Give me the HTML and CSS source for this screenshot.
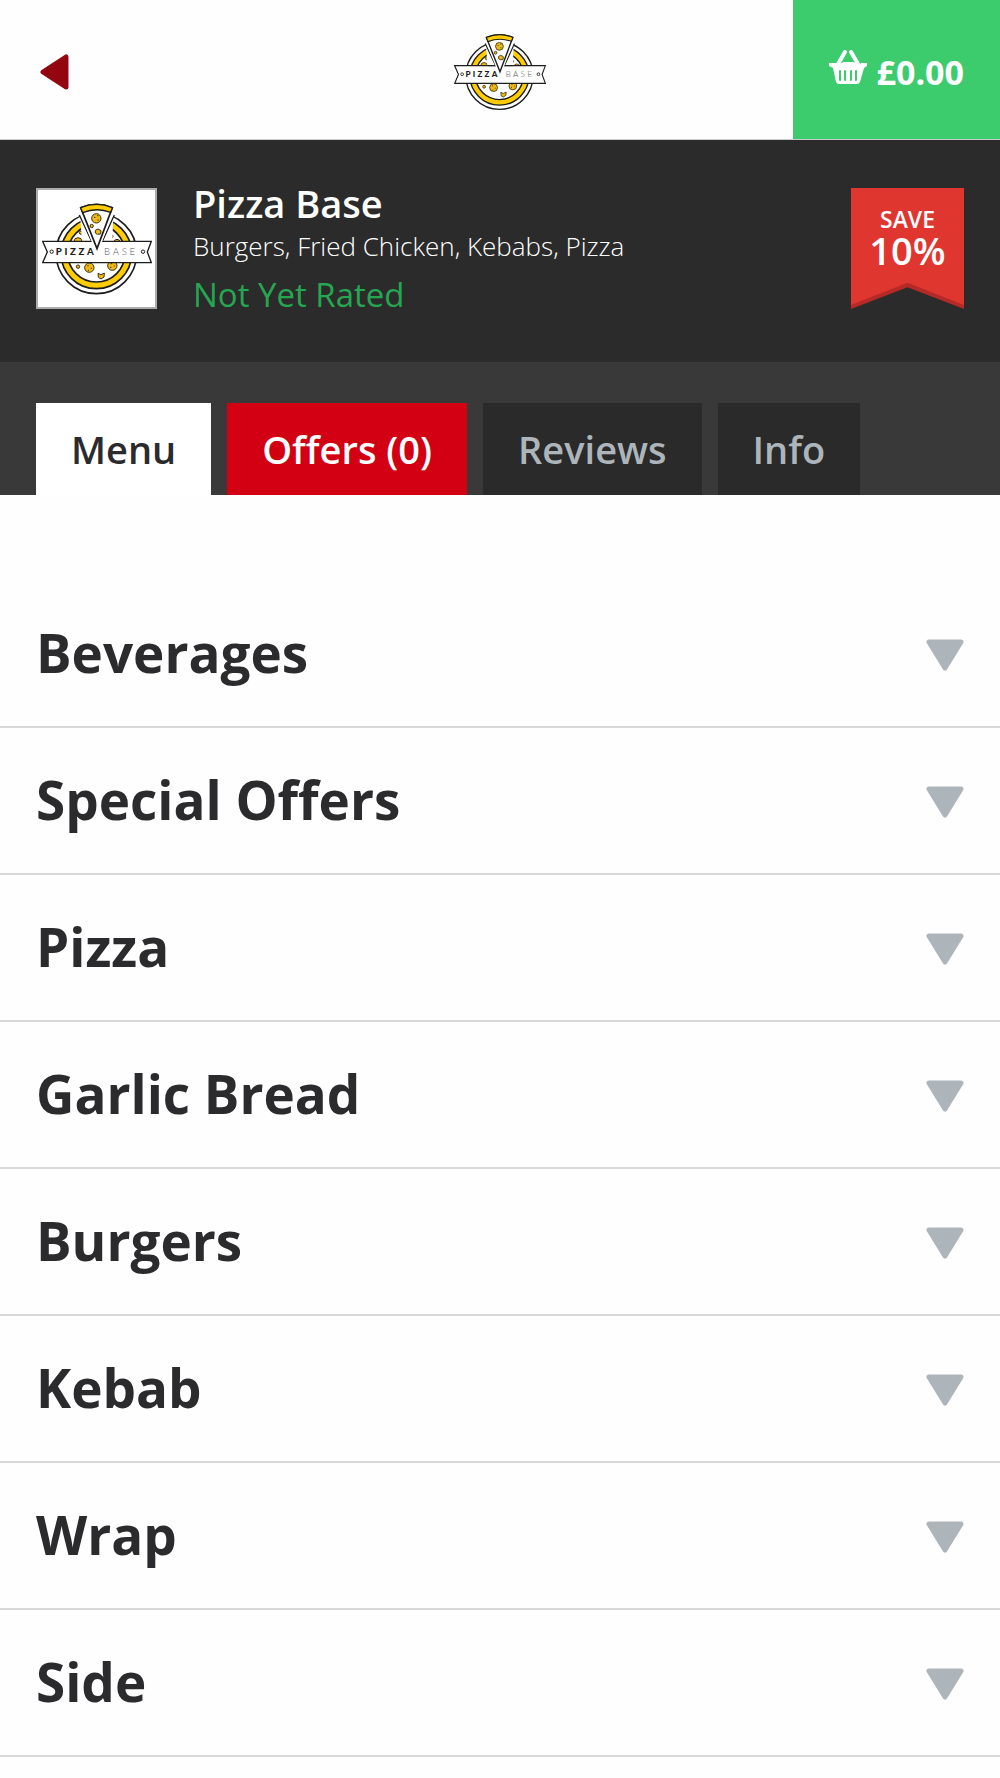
FILE: index.html
```html
<!DOCTYPE html>
<html lang="en">
<head>
    <meta charset="UTF-8">
    <meta name="viewport" content="width=device-width, initial-scale=1.0">
    <title>Pizza Base</title>
    <link rel="stylesheet" href="styles.css">
</head>
<body>
    <!-- shared drawings -->
    <svg class="sprite" aria-hidden="true">
        <symbol id="logo" viewBox="66 96 330 280">
            <circle cx="229" cy="249" r="121" fill="#fff" stroke="#1d1d1d" stroke-width="5"/>
            <circle cx="229" cy="249" r="96" fill="none" stroke="#1d1d1d" stroke-width="25"/>
            <circle cx="229" cy="249" r="96" fill="none" stroke="#fc0" stroke-width="15"/>
            <g fill="#f0b90f" stroke="#3b3214" stroke-width="3">
                <circle cx="174" cy="214" r="12"/>
                <circle cx="183" cy="187" r="5"/>
                <circle cx="274" cy="198" r="5"/>
                <circle cx="291" cy="216" r="9"/>
                <circle cx="174" cy="289" r="5"/>
                <circle cx="208" cy="292" r="14"/>
                <circle cx="277" cy="286" r="14"/>
                <path d="M234 309l9 4 10-5-1 12-9 6-8-5z"/>
                <path d="M202 286h4m6 8h4m-12 6h3m65-20h4m5 7h3m-14 4h4" fill="none"/>
            </g>
            <path d="M68 213H394L382 245 394 277H68L82 245Z" fill="#fff" stroke="#1d1d1d" stroke-width="4"/>
            <path d="M179 114Q229 90 281 114L277 212H186Z" fill="#fff"/>
            <path d="M178 134L214 211M283 134L248 211" fill="none" stroke="#1d1d1d" stroke-width="4"/>
            <path d="M186 213H277" stroke="#1d1d1d" stroke-width="4"/>
            <path d="M182 112Q230 92 277 112L231 235Z" fill="#fff" stroke="#fff" stroke-width="14"/>
            <path d="M182 112Q230 92 277 112L231 235Z" fill="#fff" stroke="#1d1d1d" stroke-width="5"/>
            <path d="M182 112Q230 92 277 112L272 126Q230 110 188 127Z" fill="#fc0" stroke="#1d1d1d" stroke-width="4"/>
            <g fill="#f0b90f" stroke="#3b3214" stroke-width="3">
                <circle cx="229" cy="144" r="14"/>
                <circle cx="215" cy="167" r="5"/>
                <path d="M226 180l8-4 9 5-1 10-10 1-6-4z"/>
                <path d="M222 141h4m5-5h4m-3 13h4" fill="none"/>
            </g>
            <circle cx="95" cy="244" r="5" fill="none" stroke="#1d1d1d" stroke-width="3"/>
            <circle cx="369" cy="244" r="5" fill="none" stroke="#1d1d1d" stroke-width="3"/>
        </symbol>
        <symbol id="arrow-down" viewBox="0 0 38 32">
            <path d="M3 3H35L19 29Z" fill="#adb5bb" stroke="#adb5bb" stroke-width="5" stroke-linejoin="round"/>
        </symbol>
    </svg>

    <header class="topbar">
        <a class="back" href="#" aria-label="Back">
            <svg width="30" height="38" viewBox="0 0 30 38"><path d="M3 19L26 4V34Z" fill="#930610" stroke="#930610" stroke-width="5" stroke-linejoin="round"/></svg>
        </a>
        <a class="brand" href="#" aria-label="Pizza Base">
            <svg width="92" height="78" viewBox="66 96 330 280">
                <use href="#logo" x="66" y="96" width="330" height="280"/>
                <text class="logo-bold" x="107" y="255">PIZZA</text>
                <text class="logo-light" x="252" y="255">BASE</text>
            </svg>
        </a>
        <a class="basket" href="#">
            <svg width="38" height="34" viewBox="0 0 38 34" aria-hidden="true">
                <path d="M0 13H7Q9 17 12 13L15 12H24L27 13Q30 17 32 13H38V16L35 18 31 32Q30 34 28 34H10Q8 34 7 32L4 18 0 16Z" fill="#fff"/>
                <path d="M16 2L9 14M22 2L29 14" fill="none" stroke="#fff" stroke-width="4" stroke-linecap="round"/>
                <path d="M11 21V30M16 21V30M22 21V30M27 21V30" fill="none" stroke="#3dcc6d" stroke-width="2" stroke-linecap="round"/>
            </svg>
            <span>£0.00</span>
        </a>
    </header>

    <section class="restaurant">
        <div class="restaurant-logo">
            <svg width="110" height="94" viewBox="66 96 330 280">
                <use href="#logo" x="66" y="96" width="330" height="280"/>
                <text class="logo-bold" x="107" y="255">PIZZA</text>
                <text class="logo-light" x="252" y="255">BASE</text>
            </svg>
        </div>
        <div class="restaurant-text">
            <h1>Pizza Base</h1>
            <p class="cuisines">Burgers, Fried Chicken, Kebabs, Pizza</p>
            <p class="rating">Not Yet Rated</p>
        </div>
        <div class="ribbon">
            <span class="ribbon-label">SAVE</span>
            <span class="ribbon-value">10%</span>
        </div>
    </section>

    <nav class="tabs">
        <a class="tab active" href="#">Menu</a>
        <a class="tab offers" href="#">Offers (0)</a>
        <a class="tab" href="#">Reviews</a>
        <a class="tab" href="#">Info</a>
    </nav>

    <main class="menu">
        <button class="category" type="button"><span>Beverages</span><svg width="38" height="32"><use href="#arrow-down"/></svg></button>
        <button class="category" type="button"><span>Special Offers</span><svg width="38" height="32"><use href="#arrow-down"/></svg></button>
        <button class="category" type="button"><span>Pizza</span><svg width="38" height="32"><use href="#arrow-down"/></svg></button>
        <button class="category" type="button"><span>Garlic Bread</span><svg width="38" height="32"><use href="#arrow-down"/></svg></button>
        <button class="category" type="button"><span>Burgers</span><svg width="38" height="32"><use href="#arrow-down"/></svg></button>
        <button class="category" type="button"><span>Kebab</span><svg width="38" height="32"><use href="#arrow-down"/></svg></button>
        <button class="category" type="button"><span>Wrap</span><svg width="38" height="32"><use href="#arrow-down"/></svg></button>
        <button class="category" type="button"><span>Side</span><svg width="38" height="32"><use href="#arrow-down"/></svg></button>
    </main>
</body>
</html>
```
FILE: styles.css
```css
* {
    box-sizing: border-box;
}

body {
    margin: 0;
    font-family: "Open Sans", sans-serif;
    color: #2b2b2d;
    background-color: #fefefe;
}

h1, p {
    margin: 0;
}

a {
    color: inherit;
    text-decoration: none;
}

svg {
    display: block;
    flex: none;
}

.sprite {
    position: absolute;
    width: 0;
    height: 0;
}

.logo-bold,
.logo-light {
    font-family: Lato, sans-serif;
    font-size: 29px;
    letter-spacing: 8px;
}

.logo-bold {
    font-weight: 900;
    fill: #1d1d1d;
}

.logo-light {
    font-weight: 300;
    fill: #555;
}

/* header */
.topbar {
    display: grid;
    grid-template-columns: 1fr auto 1fr;
    align-items: center;
    height: 140px;
    border-bottom: 1px solid #ccc;
}

.back,
.brand,
.basket {
    padding-top: 4px;
}

.back {
    justify-self: start;
    padding-left: 40px;
}

.basket {
    justify-self: end;
    align-self: stretch;
    display: flex;
    align-items: center;
    gap: 10px;
    padding-left: 36px;
    padding-right: 36px;
    background-color: #3dcc6d;
    color: #fff;
    font-size: 34px;
    font-weight: 700;
}

.basket svg {
    margin-bottom: 10px;
}

/* restaurant */
.restaurant {
    display: flex;
    align-items: flex-start;
    gap: 36px;
    padding: 48px 36px 38px;
    background-color: #2b2b2b;
    color: #fff;
}

.restaurant-logo {
    display: flex;
    align-items: center;
    justify-content: center;
    width: 121px;
    height: 121px;
    border: 2px solid #aaacae;
    background-color: #fff;
}

.restaurant-text {
    flex: 1;
    margin-top: -6px;
}

.restaurant-text h1 {
    font-size: 38px;
    font-weight: 600;
    line-height: 42px;
}

.cuisines {
    font-size: 26px;
    font-weight: 300;
    line-height: 44px;
}

.rating {
    padding-bottom: 2px;
    color: #26a651;
    font-size: 33px;
    line-height: 54px;
}

.ribbon {
    position: relative;
    display: flex;
    flex-direction: column;
    align-items: center;
    width: 113px;
    height: 121px;
    padding-top: 16px;
    background-color: #b52a26;
    clip-path: polygon(0 0, 100% 0, 100% 100%, 50% 82%, 0 100%);
}

/* lighter face, leaves the dark fold along the notch */
.ribbon::before {
    content: "";
    position: absolute;
    inset: 0 0 4px;
    background-color: #e03630;
    clip-path: polygon(0 0, 100% 0, 100% 100%, 50% 81%, 0 100%);
}

.ribbon span {
    position: relative;
}

.ribbon-label {
    font-size: 23px;
    font-weight: 600;
    line-height: 30px;
}

.ribbon-value {
    font-size: 38px;
    font-weight: 600;
    line-height: 32px;
}

/* tabs */
.tabs {
    display: flex;
    gap: 16px;
    padding: 41px 36px 0;
    background-color: #393939;
}

.tab {
    padding: 0 35px;
    background-color: #2a2a2a;
    color: #adb5bb;
    font-size: 38px;
    font-weight: 600;
    line-height: 92px;
}

.tab.active {
    background-color: #fff;
    color: #2b2b2d;
}

.tab.offers {
    background-color: #d20012;
    color: #fff;
}

/* menu categories */
.menu {
    padding-top: 86px;
}

.category {
    display: flex;
    align-items: center;
    justify-content: space-between;
    width: 100%;
    height: 147px;
    padding: 2px 36px 0;
    border: 0;
    border-bottom: 2px solid #d8d8d8;
    background: none;
    color: inherit;
    font-family: inherit;
    font-size: 53px;
    font-weight: 700;
    cursor: pointer;
}

.category span {
    padding-bottom: 5px;
}
```
